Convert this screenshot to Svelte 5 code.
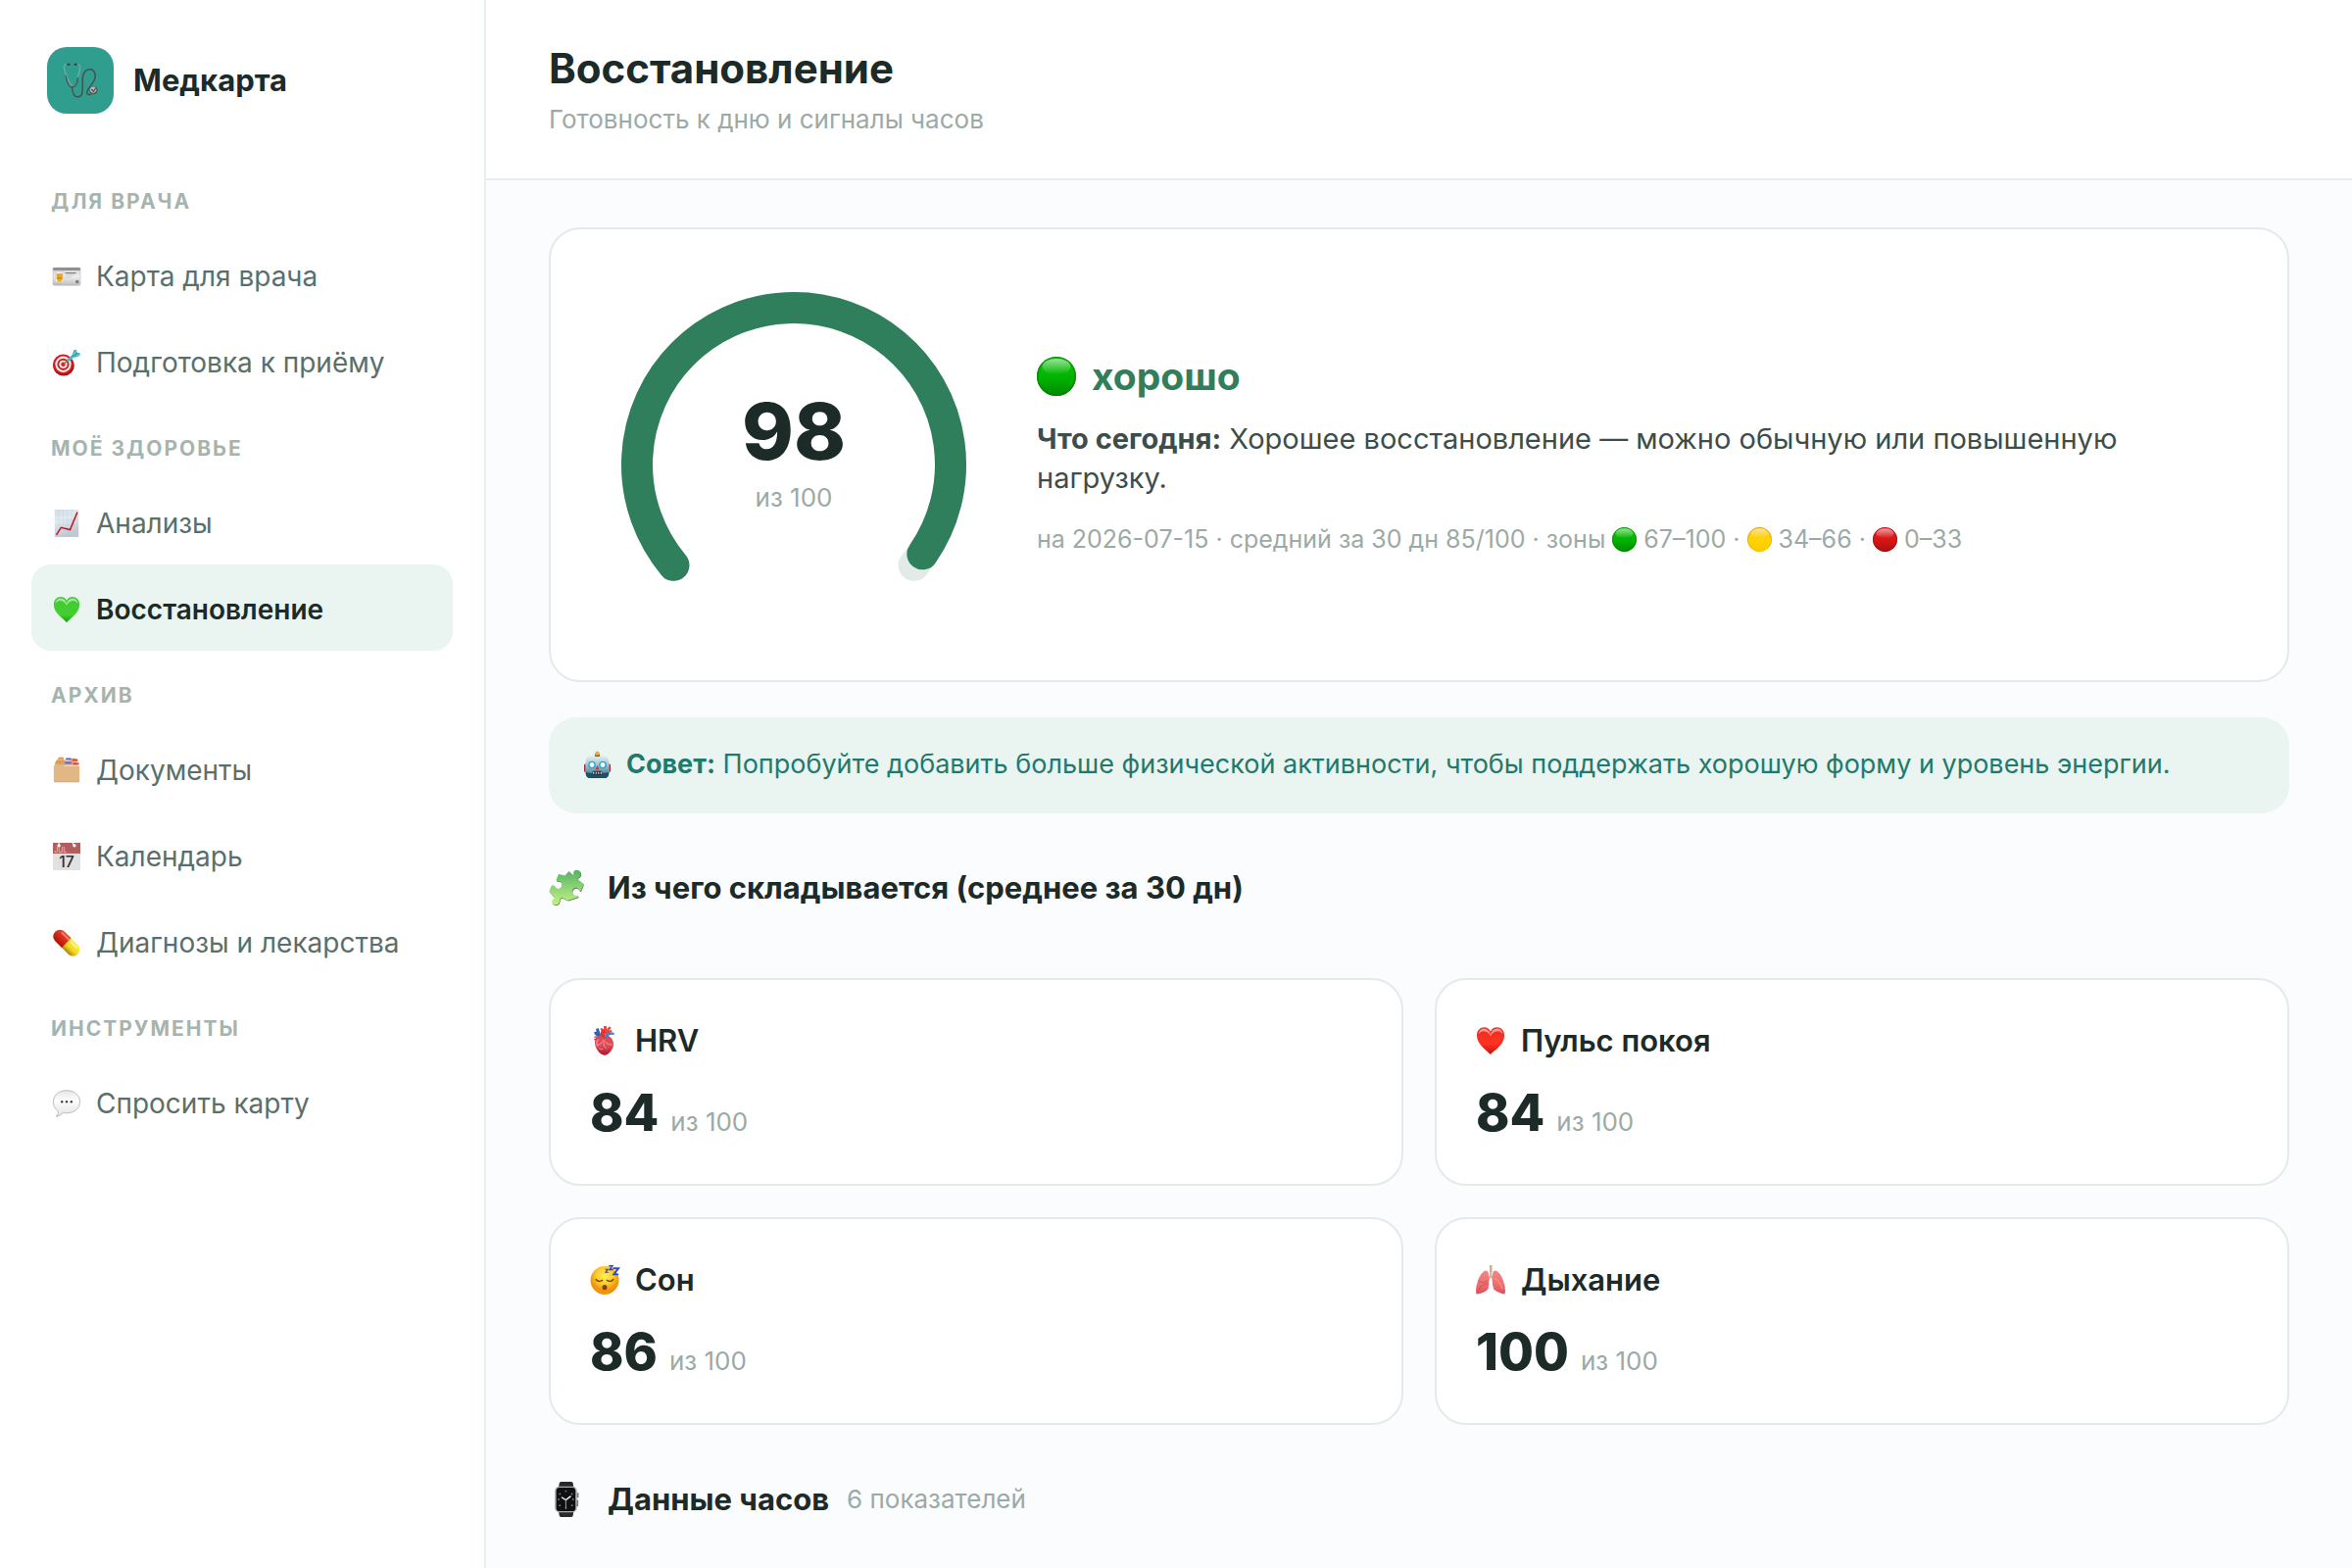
<script>
  const groups = [
    {
      title: 'Для врача',
      items: [
        { icon: 'idcard', text: 'Карта для врача' },
        { icon: 'target', text: 'Подготовка к приёму' }
      ]
    },
    {
      title: 'Моё здоровье',
      items: [
        { icon: 'chart', text: 'Анализы' },
        { icon: 'greenheart', text: 'Восстановление', active: true }
      ]
    },
    {
      title: 'Архив',
      items: [
        { icon: 'files', text: 'Документы' },
        { icon: 'calendar', text: 'Календарь' },
        { icon: 'pill', text: 'Диагнозы и лекарства' }
      ]
    },
    { title: 'Инструменты', items: [{ icon: 'bubble', text: 'Спросить карту' }] }
  ];

  const metrics = [
    { icon: 'organ', name: 'HRV', value: 84 },
    { icon: 'redheart', name: 'Пульс покоя', value: 84 },
    { icon: 'sleep', name: 'Сон', value: 86 },
    { icon: 'lungs', name: 'Дыхание', value: 100 }
  ];

  const score = 98;
  const cx = 200;
  const cy = 192;
  const radius = 160;
  const start = 140;
  const sweep = 260;

  function point(deg) {
    const a = (deg * Math.PI) / 180;
    return `${(cx + radius * Math.cos(a)).toFixed(2)} ${(cy + radius * Math.sin(a)).toFixed(2)}`;
  }

  function arc(share) {
    const span = sweep * share;
    return `M ${point(start)} A ${radius} ${radius} 0 ${span > 180 ? 1 : 0} 1 ${point(start + span)}`;
  }
</script>

{#snippet icon(name)}
  <svg class="glyph" viewBox="0 0 32 32" aria-hidden="true">
    {#if name === 'stethoscope'}
      <g fill="none" stroke-linecap="round">
        <path d="M5 1.5C2.5 1 .8 2 1.2 4.500C1.500 8 2.500 10 4 13c1.200 4 3 6.500 4.800 8" stroke="#8fa5a5" stroke-width="1" />
        <path d="M12 1.500c2.500-.5 4.200.5 3.800 3C15.500 8 14.500 10 13.800 13" stroke="#8fa5a5" stroke-width="1" />
        <path d="M2.800 12c.8 5 2.600 10 5.600 10.200c3.200 0 5-4 5.400-8.200" stroke="#4d5858" stroke-width="1.300" />
        <path d="M8.400 22c.4 5 1.600 9 5 9c4.500 0 4.600-4 4.600-9c0-6-1-15 6-16c5-.4 6.800 5 4.500 10c-2 4.500-6 7-6.500 10.500c-.3 2.500 1.800 3 3.500 2" stroke="#46504f" stroke-width="1.300" />
        <path d="M4.500 1.500h1.500M11 1.500h1.500" stroke="#3c4444" stroke-width="1.800" />
      </g>
      <circle cx="28" cy="25" r="3.600" fill="#555" />
      <circle cx="27.700" cy="24.500" r="2.800" fill="#b9bcbc" />
      <path d="M26 24l2 2 2-3" fill="none" stroke="#4b4b4b" stroke-width="1" />
    {:else if name === 'idcard'}
      <rect x="0" y="6" width="32" height="20.500" rx="1.500" fill="url(#g-card)" stroke="#b5b5b5" stroke-width=".6" />
      <rect x="0" y="5.800" width="32" height="3.200" rx="1" fill="#909090" />
      <rect x="2.500" y="10.500" width="10" height="12" fill="#fafafa" stroke="#a8b7c4" stroke-width=".6" />
      <path d="M4 12l1.500.7h4.200l1.500-.7l.3 7.500l-2 2.500H6l-2-2.500z" fill="#f2ad1c" />
      <path d="M5 18h5M6 15h.8M8.800 15h.8" stroke="#9a5e13" stroke-width=".9" />
      <path d="M14.500 12.200H27" stroke="#55595c" stroke-width="1" />
      <path d="M14.500 14.800h10M14.500 17h7" stroke="#bdbdbd" stroke-width=".7" />
      <circle cx="28.200" cy="22.300" r="1.900" fill="#77797b" />
      <path d="M3 24.500h6" stroke="#b0b0b0" stroke-width=".7" />
    {:else if name === 'target'}
      <ellipse cx="12.500" cy="19.500" rx="12.300" ry="12" fill="#9c0d12" />
      <circle cx="12" cy="18" r="11.800" fill="#d9191e" />
      <circle cx="12" cy="18" r="9.300" fill="#f7eeee" />
      <circle cx="12" cy="18" r="7" fill="#d9191e" />
      <circle cx="12" cy="18" r="4.700" fill="#f7eeee" />
      <circle cx="12" cy="18" r="2.500" fill="#d9191e" />
      <path d="M12 18L19 12" stroke="#9b7428" stroke-width="1.500" />
      <path d="M18 13L27 5.500" stroke="#3fbccb" stroke-width="3.600" stroke-linecap="round" />
      <path d="M22.500 7.500l2-6L27.500.8l.3 3.500L32 5l-1 3l-5.500 2z" fill="#36a9ba" />
      <path d="M24.500 6.500l2-4M27 8l4-2" stroke="#8fe2ea" stroke-width=".9" />
    {:else if name === 'chart'}
      <rect x="2" y="0" width="28" height="32" fill="url(#g-chart)" />
      <path d="M7 0v32M12 0v32M17 0v32M22 0v32M2 6h28M2 12h28M2 18h28M2 24h28" stroke="#c3d1dc" stroke-width=".4" />
      <path d="M4 29.500L9.500 21L20 23.500L28.500 3" fill="none" stroke="#c8141a" stroke-width="1.700" />
    {:else if name === 'greenheart' || name === 'redheart'}
      <path
        d="M16 31C12 26 1 20.500 1 10C1 4.500 4.800 1.200 9 1.200c3.200 0 5.800 1.800 7 4.600c1.200-2.800 3.800-4.600 7-4.600c4.200 0 8 3.300 8 8.800C31 20.500 20 26 16 31z"
        fill={name === 'redheart' ? 'url(#g-red-heart)' : 'url(#g-green-heart)'}
      />
      <path
        d="M3 9C3 4 7 2.600 9.500 2.800C12.500 3 15 5.500 16 9c1-3.500 3.500-6 6.500-6.200C25 2.600 29 4 29 9c-1-2.500-3.500-3.600-6-3.400c-3 .2-5.500 2.400-7 5.400c-1.500-3-4-5.200-7-5.400C6.500 5.400 4 6.500 3 9z"
        fill="#fff"
        opacity=".5"
      />
    {:else if name === 'files'}
      <path d="M3 6L7 1h5l1 3h6l1-2h7l2 8H2z" fill="#d3a367" />
      <path d="M6.500 1.800h6M4.500 5.500h7" stroke="#f39436" stroke-width="2" />
      <path d="M15 2.800h6M14 7.200h7.500" stroke="#5661e8" stroke-width="2" />
      <path d="M23 4h6M23.500 8.500h7" stroke="#ef3340" stroke-width="2" />
      <path d="M4.500 3.600h8M14 5h7M23 6.200h6" stroke="#e7c79b" stroke-width="1" />
      <path d="M1 11.500q0-1.500 1.500-1.500H12l2 .8H31V28q0 1.500-1.500 1.500h-27Q1 29.500 1 28z" fill="#e0b785" />
      <path d="M1.200 28.500q.3 1 1.300 1h27q1 0 1.300-1" fill="none" stroke="#c49560" stroke-width=".8" />
    {:else if name === 'calendar'}
      <rect x="0" y="0" width="32" height="32" fill="#e1e1e1" />
      <rect x="0" y="0" width="32" height="12.500" fill="#b25d5f" />
      <circle cx="7" cy="3.200" r="1.900" fill="#fff" />
      <path d="M7 0v3M23 0l2 3" stroke="#fff" stroke-width="1.200" />
      <circle cx="25" cy="3.200" r="1.900" fill="#fff" />
      <text class="cal-month" x="1.500" y="11">JUL</text>
      <text class="cal-day" x="16" y="28.500" text-anchor="middle">17</text>
    {:else if name === 'pill'}
      <g transform="rotate(45 16 16)">
        <rect x="-2.500" y="8.500" width="37" height="15.500" rx="7.700" fill="url(#g-yellow-pill)" />
        <path d="M16 8.500H5.200a7.700 7.700 0 0 0 0 15.500H16z" fill="url(#g-red-pill)" />
        <path d="M4 11.500h11" stroke="#ff9a80" stroke-width="2" stroke-linecap="round" opacity=".8" />
        <path d="M18 11.800h10" stroke="#fff79a" stroke-width="2" stroke-linecap="round" opacity=".9" />
      </g>
    {:else if name === 'bubble'}
      <path
        d="M16 .8c9 0 15.500 5.500 15.500 13.200S25 27.200 16 27.200c-1.500 0-3-.1-4.200-.4C9.500 29.500 6.500 31 3.500 31c2-1.500 3-3.600 2.800-6C2.600 22.600.5 18.800.5 14C.5 6.300 7 .8 16 .8z"
        fill="url(#g-bubble)"
        stroke="#b4b4b4"
        stroke-width="1"
      />
      <circle cx="10.500" cy="14" r="1.400" fill="#444" />
      <circle cx="16" cy="14" r="1.400" fill="#444" />
      <circle cx="21.500" cy="14" r="1.400" fill="#444" />
    {:else if name === 'green' || name === 'yellow' || name === 'red'}
      <circle cx="16" cy="16" r="16" fill="url(#g-{name})" />
      <circle cx="16" cy="16" r="15.400" fill="none" stroke="url(#g-{name}-rim)" stroke-width="1.200" />
      <ellipse cx="16" cy="8" rx="11.500" ry="6.500" fill="url(#g-shine)" />
    {:else if name === 'robot'}
      <rect x="13" y="3" width="6" height="4" fill="#5a4a8c" />
      <circle cx="16" cy="2.400" r="2.700" fill="#f4a534" />
      <path d="M0 16.500q0-2 2-2V25q-2 0-2-2zM32 16.500q0-2-2-2V25q2 0 2-2z" fill="#a12a38" />
      <path d="M2 26V12Q2.500 5 10 5h12Q29.500 5 30 12v14q0 6-6 6H8q-6 0-6-6z" fill="url(#g-robot)" />
      <path d="M2 25q14 3.500 28 0v1q0 6-6 6H8q-6 0-6-6z" fill="#1b5266" />
      <path d="M12.500 6q3.500-3 7 0z" fill="#544c94" />
      <circle cx="9.500" cy="16" r="4.500" fill="#20a5d8" />
      <circle cx="22.500" cy="16" r="4.500" fill="#20a5d8" />
      <circle cx="9.500" cy="16" r="2.900" fill="#f5ffff" />
      <circle cx="22.500" cy="16" r="2.900" fill="#f5ffff" />
      <path d="M16 16.500l2.400 5h-4.800z" fill="#d32f35" />
      <rect x="10" y="23.500" width="12" height="4.500" rx="1.800" fill="#272f38" />
      <path d="M11.500 24.500v2.500M14.500 24.500v2.500M17.500 24.500v2.500M20.500 24.500v2.500" stroke="#dfe8ea" stroke-width="1.300" />
    {:else if name === 'puzzle'}
      <g stroke-linejoin="round">
        {#each ['#56783f', 'url(#g-puzzle)'] as paint, layer}
          <path
            transform={layer === 0 ? 'translate(.4 .7)' : undefined}
            d="M9 3.500L14.500 4.800L18.300.8L21.500 4C22.500 4.600 22.600 3.800 22.400 3C22-.8 27-1 28.700 1.600C30 4.500 28 6.300 26.500 7C25.800 7.600 26 8 26.600 8.500L31.500 12.400L29.300 18.500C28.500 19.300 27.800 18.600 27 17C25 14.500 21 16.500 21.200 19.800C21.500 23 24 23 26 22.800C27 23.200 26.800 24 26.400 24.500L17.500 27.400L13 25.300C11 24.500 9.800 25.500 10 27.500C9.800 31 6 32.500 3.800 30.500C2 28.500 3.500 26.500 5 25.800C5.600 25 5 24.500 4.400 24L.3 19L2.500 14C3.500 13 5 13.800 6 15.500C8.500 18 12 16 11.800 12.800C11.500 9.800 9 9.500 7.500 9.800C6.500 9.500 6.800 8.500 7 8z"
            fill={paint}
          />
        {/each}
      </g>
    {:else if name === 'organ'}
      <path d="M14 8L11 3l2-1 2 2V0h3l.5 4L20.500.5l2.500 1L21 5l2.500-1L24 6l-5 4z" fill="#e8453e" />
      <path d="M9 12L5 9 4.500 6.500 7 6l-.5-3 3-.5.8 3L12.500 11z" fill="#2a64b4" />
      <path d="M7 12q10-6 17 2q4 6-1 13q-4 5-7.500 4.800Q9 30 6 22q-2-6 1-10z" fill="url(#g-organ)" />
      <path d="M14 13q3-7 12-6l.5 2.500q-7-1-9.500 5z" fill="#3f83d2" />
      <path d="M12.500 12Q10 6 14 3.500l3 2Q15 9 16.500 13z" fill="#e4322f" />
      <path d="M4.500 12l3-.5M4.500 14.500l4-.5" stroke="#c42b43" stroke-width="1.300" />
      <path d="M8 21q4-1 7-6q4 6 9 5M15 17q-1 5 3 8M10 24q2 2 4 1" fill="none" stroke="#f59aa0" stroke-width=".9" />
      <path d="M9 14q-3 4-.5 8" fill="none" stroke="#f58892" stroke-width="1.500" />
    {:else if name === 'sleep'}
      <circle cx="16" cy="16.500" r="15.400" fill="url(#g-face)" />
      <path d="M6.500 15.500q3 3.500 7 1M18.500 16.500q4 2.500 7-1" fill="none" stroke="#7a4313" stroke-width="1.600" stroke-linecap="round" />
      <ellipse cx="16" cy="24" rx="2.600" ry="2.800" fill="#7d3f12" />
      <path d="M25 3.500h6l-5 6.500h5" fill="none" stroke="#2848c4" stroke-width="2" />
      <path d="M20.500.8h4l-3 4h3.500" fill="none" stroke="#2848c4" stroke-width="1.400" />
      <path d="M16.500 4.500h3l-2.500 3.200h3" fill="none" stroke="#2848c4" stroke-width="1.200" />
    {:else if name === 'lungs'}
      <path d="M15 0h2.500v11l4 6-1.500 1-3.700-4.500L12.500 18 11 17l4-6z" fill="#d3b5a4" />
      <path d="M15 1.500h2.500M15 4h2.500M15 6.500h2.500" stroke="#b9907c" stroke-width=".7" />
      <path d="M13.500 8Q12 4.500 9 6.500Q3 11 .5 23Q-.5 30 .8 31.500Q8 31 13 26.500Q14.500 22 14.300 14z" fill="url(#g-lung)" />
      <path d="M18.500 8Q20 4.500 23 6.500Q29 11 31.500 23Q32.500 30 31.200 31.500Q26 31 19.500 26.500Q17.500 22 17.700 14z" fill="url(#g-lung)" />
      <path d="M3 17q5 4 11-1M2 28q4-8 12-8" fill="none" stroke="#c54b50" stroke-width=".8" />
      <path d="M20 14q6 3 9 12" fill="none" stroke="#f7a1a0" stroke-width="1" />
    {:else if name === 'watch'}
      <path d="M9 5L9.500 1.500Q9.700 0 11 0h9.500Q21.800 0 22 1.500L22.500 5zM9 27l.5 3.500Q9.700 32 11 32h9.500q1.300 0 1.500-1.500l.5-3.500z" fill="#29292b" />
      <rect x="5.500" y="4.300" width="20" height="23.400" rx="4" fill="#a9aaab" />
      <rect x="6.800" y="5.300" width="17.400" height="21.400" rx="3" fill="#0f1011" />
      <path d="M26.300 10v4.500M26 16.500v6" stroke="#77797b" stroke-width="1.500" />
      <g fill="#7b7f81">
        <circle cx="15.500" cy="8.500" r=".8" /><circle cx="15.500" cy="24" r=".8" />
        <circle cx="9" cy="16" r=".8" /><circle cx="22" cy="16" r=".8" />
        <circle cx="10" cy="11" r=".8" /><circle cx="21" cy="11" r=".8" />
        <circle cx="10" cy="21.500" r=".8" /><circle cx="21" cy="21.500" r=".8" />
      </g>
      <path d="M11.500 14l4 2.500l4.500-3.500" fill="none" stroke="#f2f2f2" stroke-width="1.200" />
      <path d="M15.500 16v8" stroke="#e09b22" stroke-width=".9" />
    {/if}
  </svg>
{/snippet}

<svg class="defs" width="0" height="0" aria-hidden="true">
  <defs>
    <linearGradient id="g-card" x2="0" y2="1"><stop offset="0" stop-color="#d2d2d2" /><stop offset=".5" stop-color="#efefef" /><stop offset="1" stop-color="#bcbcbc" /></linearGradient>
    <linearGradient id="g-chart" x2=".3" y2="1"><stop offset="0" stop-color="#cfdbe6" /><stop offset=".4" stop-color="#e3ebf2" /><stop offset="1" stop-color="#bcc8d3" /></linearGradient>
    <linearGradient id="g-green-heart" x2="0" y2="1"><stop offset="0" stop-color="#3fc936" /><stop offset=".7" stop-color="#43d02c" /><stop offset="1" stop-color="#149a16" /></linearGradient>
    <linearGradient id="g-red-heart" x2="0" y2="1"><stop offset="0" stop-color="#ef2b20" /><stop offset=".6" stop-color="#ff3324" /><stop offset="1" stop-color="#c90c08" /></linearGradient>
    <linearGradient id="g-red-pill" x2="0" y2="1"><stop offset="0" stop-color="#f04a30" /><stop offset="1" stop-color="#b60d08" /></linearGradient>
    <linearGradient id="g-yellow-pill" x2="0" y2="1"><stop offset="0" stop-color="#fff050" /><stop offset=".6" stop-color="#f1d51d" /><stop offset="1" stop-color="#a88608" /></linearGradient>
    <linearGradient id="g-bubble" x2="0" y2="1"><stop offset="0" stop-color="#e6e6e6" /><stop offset=".4" stop-color="#fdfdfd" /><stop offset="1" stop-color="#e4e4e4" /></linearGradient>
    <linearGradient id="g-green" x2="0" y2="1"><stop offset="0" stop-color="#17c213" /><stop offset=".55" stop-color="#00b200" /><stop offset="1" stop-color="#008900" /></linearGradient>
    <linearGradient id="g-green-rim" x2="0" y2="1"><stop offset="0" stop-color="#0b9f0b" /><stop offset="1" stop-color="#008500" /></linearGradient>
    <linearGradient id="g-yellow" x2="0" y2="1"><stop offset="0" stop-color="#f8c21c" /><stop offset=".5" stop-color="#ffd400" /><stop offset="1" stop-color="#ffc800" /></linearGradient>
    <linearGradient id="g-yellow-rim" x2="0" y2="1"><stop offset="0" stop-color="#dd9c1c" /><stop offset="1" stop-color="#f7be0a" /></linearGradient>
    <linearGradient id="g-red" x2="0" y2="1"><stop offset="0" stop-color="#d92a2a" /><stop offset=".5" stop-color="#da1615" /><stop offset="1" stop-color="#ac0e10" /></linearGradient>
    <linearGradient id="g-red-rim" x2="0" y2="1"><stop offset="0" stop-color="#bd1418" /><stop offset="1" stop-color="#a50d10" /></linearGradient>
    <linearGradient id="g-shine" x2="0" y2="1"><stop offset="0" stop-color="#fff" stop-opacity=".55" /><stop offset="1" stop-color="#fff" stop-opacity="0" /></linearGradient>
    <linearGradient id="g-robot" x2="0" y2="1"><stop offset="0" stop-color="#e4f0f1" /><stop offset=".4" stop-color="#a3c5cc" /><stop offset="1" stop-color="#2b6a80" /></linearGradient>
    <linearGradient id="g-puzzle" x2="0" y2="1"><stop offset="0" stop-color="#52b263" /><stop offset=".5" stop-color="#8fd377" /><stop offset="1" stop-color="#c4f283" /></linearGradient>
    <linearGradient id="g-organ" x2="0" y2="1"><stop offset="0" stop-color="#dd4452" /><stop offset=".5" stop-color="#e0525c" /><stop offset="1" stop-color="#b10f2c" /></linearGradient>
    <radialGradient id="g-face" cy=".35"><stop offset="0" stop-color="#fff04e" /><stop offset=".6" stop-color="#fdcb2c" /><stop offset="1" stop-color="#f0940f" /></radialGradient>
    <linearGradient id="g-lung" x2="0" y2="1"><stop offset="0" stop-color="#f38784" /><stop offset=".6" stop-color="#ee6f70" /><stop offset="1" stop-color="#d84f57" /></linearGradient>
  </defs>
</svg>

<div class="page">
  <aside class="sidebar">
    <div class="brand">
      <span class="tile">{@render icon('stethoscope')}</span>
      <span class="brand-name">Медкарта</span>
    </div>
    <nav aria-label="Разделы">
      {#each groups as group}
        <h2 class="group">{group.title}</h2>
        {#each group.items as item}
          <a class="item" class:active={item.active} href="#{item.icon}" aria-current={item.active ? 'page' : undefined}>
            <span class="item-icon">{@render icon(item.icon)}</span>
            <span>{item.text}</span>
          </a>
        {/each}
      {/each}
    </nav>
  </aside>

  <div class="content">
    <header class="top">
      <h1>Восстановление</h1>
      <p class="subtitle">Готовность к дню и сигналы часов</p>
    </header>

    <main>
      <section class="card hero">
        <div class="gauge">
          <svg class="dial" viewBox="0 0 400 364" aria-hidden="true">
            <path d={arc(1)} class="track" />
            <path d={arc(score / 100)} class="fill" />
          </svg>
          <div class="reading">
            <strong class="score">{score}</strong>
            <span class="muted">из 100</span>
          </div>
        </div>
        <div class="summary">
          <div class="status">
            <span class="status-icon">{@render icon('green')}</span>
            <span>хорошо</span>
          </div>
          <p class="today"><b>Что сегодня:</b> Хорошее восстановление — можно обычную или повышенную нагрузку.</p>
          <p class="meta">
            на 2026-07-15 · средний за 30 дн 85/100 · зоны <span class="zone">{@render icon('green')}</span> 67–100 ·
            <span class="zone">{@render icon('yellow')}</span> 34–66 · <span class="zone">{@render icon('red')}</span> 0–33
          </p>
        </div>
      </section>

      <section class="tip">
        <span class="tip-icon">{@render icon('robot')}</span>
        <p><b>Совет:</b> Попробуйте добавить больше физической активности, чтобы поддержать хорошую форму и уровень энергии.</p>
      </section>

      <h2 class="section">
        <span class="section-icon">{@render icon('puzzle')}</span>
        <span>Из чего складывается (среднее за 30 дн)</span>
      </h2>

      <div class="metrics">
        {#each metrics as metric}
          <article class="card metric">
            <h3>
              <span class="metric-icon">{@render icon(metric.icon)}</span>
              <span>{metric.name}</span>
            </h3>
            <p class="value"><strong>{metric.value}</strong><span class="muted">из 100</span></p>
          </article>
        {/each}
      </div>

      <h2 class="section">
        <span class="section-icon">{@render icon('watch')}</span>
        <span>Данные часов</span>
        <small class="muted">6 показателей</small>
      </h2>
    </main>
  </div>
</div>

<style>
  :global(body) {
    margin: 0;
    background: #fbfcfe;
  }

  .defs {
    position: absolute;
  }

  .page {
    display: grid;
    grid-template-columns: 496px 1fr;
    min-height: 100vh;
    box-sizing: border-box;
    font-family: Inter, 'Open Sans', sans-serif;
    font-size: 28px;
    line-height: 40px;
    color: #1c2a28;
  }

  h1,
  h2,
  h3,
  p {
    margin: 0;
  }

  .glyph {
    display: block;
    width: 100%;
    height: auto;
    overflow: visible;
  }

  .cal-month {
    font-size: 8px;
    fill: #e8c9c9;
  }

  .cal-day {
    font-size: 18px;
    font-weight: 500;
    fill: #2f3133;
  }

  .muted {
    font-size: 26px;
    font-weight: 400;
    line-height: 36px;
    color: #9caaa6;
  }

  .sidebar {
    padding: 48px 32px;
    background: #fff;
    border-right: 2px solid #e8efed;
  }

  .brand {
    display: flex;
    align-items: center;
    gap: 20px;
    margin-bottom: 44px;
    padding-left: 16px;
  }

  .tile {
    display: grid;
    place-items: center;
    width: 68px;
    height: 68px;
    border-radius: 20px;
    background: #2f9e8f;
  }

  .tile .glyph {
    width: 36px;
  }

  .brand-name {
    font-size: 31px;
    font-weight: 700;
  }

  .group {
    padding: 32px 20px 16px;
    font-size: 21px;
    font-weight: 700;
    line-height: 28px;
    letter-spacing: 2px;
    text-transform: uppercase;
    color: #a6b4b0;
  }

  .item {
    display: flex;
    align-items: center;
    gap: 14px;
    padding: 26px 20px 22px;
    border-radius: 20px;
    color: #5b6f6a;
    text-decoration: none;
    white-space: nowrap;
  }

  .item-icon {
    width: 28px;
    padding: 0 2px;
  }

  .item.active {
    background: #eaf4f1;
    color: #1c2a28;
    font-weight: 600;
  }

  .top {
    padding: 46px 64px 42px;
    background: #fff;
    border-bottom: 2px solid #e8efed;
  }

  h1 {
    font-size: 42px;
    font-weight: 700;
    line-height: 48px;
  }

  .subtitle {
    margin-top: 10px;
    font-size: 26px;
    line-height: 36px;
    color: #9caaa6;
  }

  main {
    padding: 48px 64px 40px;
  }

  .card {
    border: 2px solid #e3ebe9;
    border-radius: 32px;
    background: #fff;
  }

  .hero {
    display: flex;
    align-items: center;
    gap: 48px;
    padding: 48px;
  }

  .gauge {
    display: grid;
    flex: none;
    width: 400px;
  }

  .gauge > * {
    grid-area: 1 / 1;
  }

  .dial {
    display: block;
    width: 100%;
  }

  .track,
  .fill {
    fill: none;
    stroke: #e3ebe9;
    stroke-width: 32px;
    stroke-linecap: round;
  }

  .fill {
    stroke: #2f7e5c;
  }

  .reading {
    display: flex;
    flex-direction: column;
    align-items: center;
    padding-top: 114px;
  }

  .score {
    font-size: 80px;
    font-weight: 800;
    line-height: 88px;
    margin-bottom: 6px;
  }

  .summary {
    flex: 1;
  }

  .status {
    display: flex;
    align-items: center;
    gap: 16px;
    font-size: 39px;
    font-weight: 700;
    line-height: 48px;
    color: #2f7e5c;
  }

  .status-icon {
    width: 40px;
  }

  .today {
    margin: 20px 0 24px;
    max-width: 1180px;
    font-size: 29px;
    color: #3c4d4a;
  }

  .meta {
    font-size: 25px;
    line-height: 36px;
    color: #9caaa6;
  }

  .zone {
    display: inline-block;
    width: 25px;
    vertical-align: -4px;
  }

  .tip {
    display: flex;
    align-items: center;
    gap: 16px;
    margin-top: 36px;
    padding: 28px 36px 30px;
    border-radius: 28px;
    background: #eaf4f1;
    font-size: 27px;
    color: #1f7a6c;
  }

  .tip-icon {
    flex: none;
    width: 27px;
  }

  .section {
    display: flex;
    align-items: center;
    gap: 24px;
    margin-top: 54px;
    font-size: 31px;
    font-weight: 700;
    line-height: 44px;
  }

  .section small {
    margin-left: -6px;
  }

  .section-icon {
    width: 36px;
  }

  .metrics {
    display: grid;
    grid-template-columns: 1fr 1fr;
    gap: 32px;
    margin-top: 70px;
  }

  .metric {
    padding: 40px;
  }

  h3 {
    display: flex;
    align-items: center;
    gap: 16px;
    font-size: 31px;
    font-weight: 600;
    line-height: 44px;
  }

  .metric-icon {
    width: 30px;
  }

  .value {
    display: flex;
    align-items: baseline;
    gap: 12px;
    margin-top: 20px;
    line-height: 64px;
  }

  .value strong {
    font-size: 52px;
    font-weight: 800;
  }
</style>
